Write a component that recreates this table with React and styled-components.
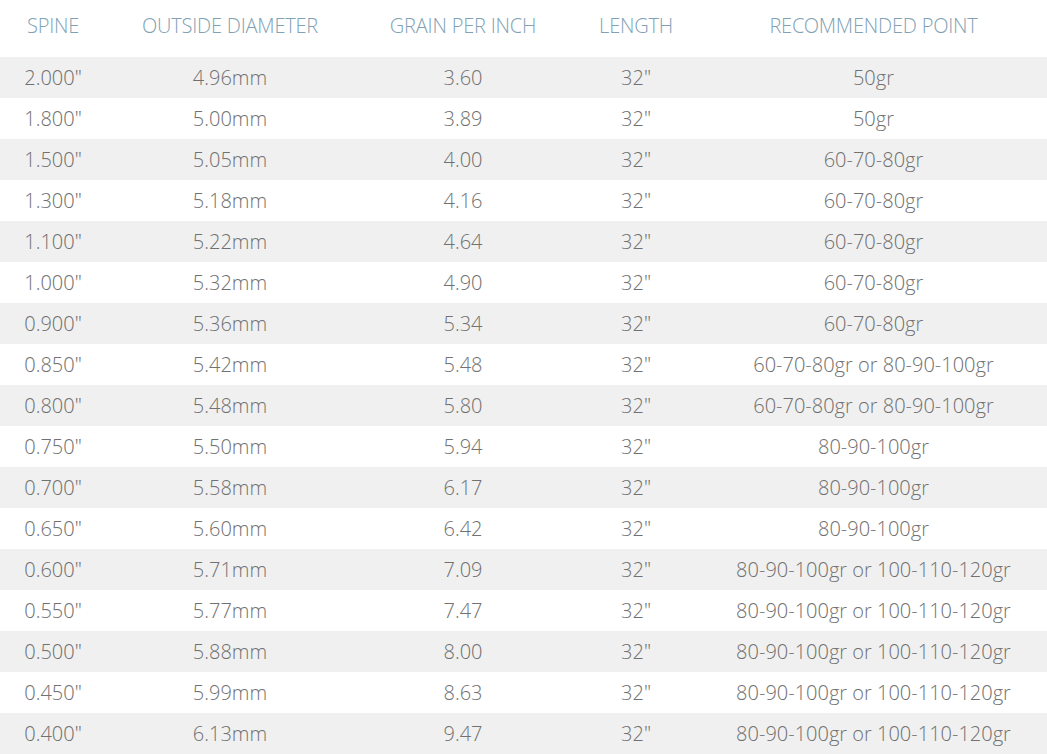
import React from "react";
import styled, { createGlobalStyle } from "styled-components";

const Global = createGlobalStyle`
  html, body { margin: 0; padding: 0; background: #fff; }
  body { font-family: "Open Sans Light", "Open Sans", "Liberation Sans", sans-serif; }
`;

const Table = styled.div`
  width: 1047px;
  display: grid;
  grid-template-columns: 106px 248px 218px 128px 1fr;
`;

const Row = styled.div`
  display: contents;
`;

const HeadCell = styled.div`
  height: 57px;
  display: flex;
  align-items: center;
  justify-content: center;
  padding-bottom: 6px;
  box-sizing: border-box;
  font-weight: 300;
  font-size: 20px;
  letter-spacing: -0.2px;
  color: #80a2b4;
  white-space: nowrap;
`;

const Cell = styled.div`
  height: 41px;
  display: flex;
  align-items: center;
  justify-content: center;
  font-weight: 300;
  font-size: 20px;
  color: #717171;
  white-space: nowrap;
  background: ${(p) => (p.$alt ? "#f0f0f0" : "#ffffff")};
`;

const headers = ["SPINE", "OUTSIDE DIAMETER", "GRAIN PER INCH", "LENGTH", "RECOMMENDED POINT"];

const rows = [
  ['2.000"', "4.96mm", "3.60", "50gr"],
  ['1.800"', "5.00mm", "3.89", "50gr"],
  ['1.500"', "5.05mm", "4.00", "60-70-80gr"],
  ['1.300"', "5.18mm", "4.16", "60-70-80gr"],
  ['1.100"', "5.22mm", "4.64", "60-70-80gr"],
  ['1.000"', "5.32mm", "4.90", "60-70-80gr"],
  ['0.900"', "5.36mm", "5.34", "60-70-80gr"],
  ['0.850"', "5.42mm", "5.48", "60-70-80gr or 80-90-100gr"],
  ['0.800"', "5.48mm", "5.80", "60-70-80gr or 80-90-100gr"],
  ['0.750"', "5.50mm", "5.94", "80-90-100gr"],
  ['0.700"', "5.58mm", "6.17", "80-90-100gr"],
  ['0.650"', "5.60mm", "6.42", "80-90-100gr"],
  ['0.600"', "5.71mm", "7.09", "80-90-100gr or 100-110-120gr"],
  ['0.550"', "5.77mm", "7.47", "80-90-100gr or 100-110-120gr"],
  ['0.500"', "5.88mm", "8.00", "80-90-100gr or 100-110-120gr"],
  ['0.450"', "5.99mm", "8.63", "80-90-100gr or 100-110-120gr"],
  ['0.400"', "6.13mm", "9.47", "80-90-100gr or 100-110-120gr"],
];

export default function App() {
  return (
    <>
      <Global />
      <Table>
        <Row>
          {headers.map((h) => (
            <HeadCell key={h}>{h}</HeadCell>
          ))}
        </Row>
        {rows.map((r, i) => {
          const alt = i % 2 === 0;
          return (
            <Row key={r[0]}>
              <Cell $alt={alt}>{r[0]}</Cell>
              <Cell $alt={alt}>{r[1]}</Cell>
              <Cell $alt={alt}>{r[2]}</Cell>
              <Cell $alt={alt}>32"</Cell>
              <Cell $alt={alt}>{r[3]}</Cell>
            </Row>
          );
        })}
      </Table>
    </>
  );
}
